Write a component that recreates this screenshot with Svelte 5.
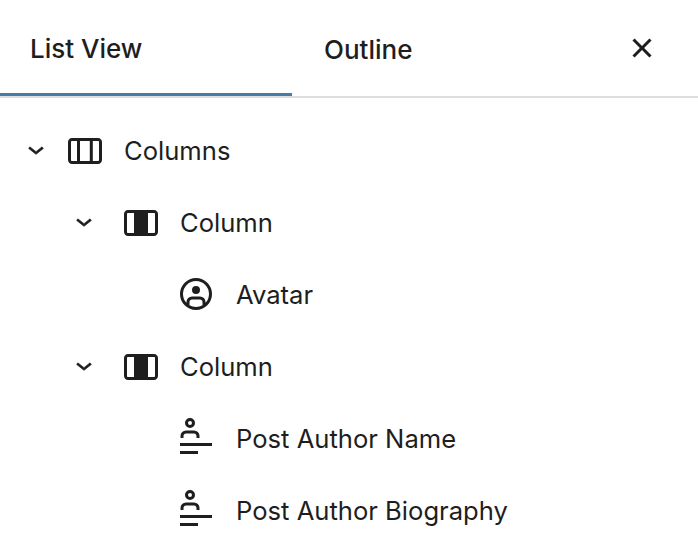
<script>
  const icons = {
    columns: "M19 6H6c-1.1 0-2 .9-2 2v9c0 1.1.9 2 2 2h13c1.1 0 2-.9 2-2V8c0-1.1-.9-2-2-2zm-4.1 1.5v10H10v-10h4.9zM5.5 17V8c0-.3.2-.5.5-.5h2.5v10H6c-.3 0-.5-.2-.5-.5zm14 0c0 .3-.2.5-.5.5h-2.6v-10H19c.3 0 .5.2.5.5v9z",
    column: "M19 6H6c-1.1 0-2 .9-2 2v9c0 1.1.9 2 2 2h13c1.1 0 2-.9 2-2V8c0-1.1-.9-2-2-2zM6 17.5c-.3 0-.5-.2-.5-.5V8c0-.3.2-.5.5-.5h3v10H6zm13.5-.5c0 .3-.2.5-.5.5h-3v-10h3c.3 0 .5.2.5.5v9z",
    avatar: "M7.25 16.437a6.5 6.5 0 1 1 9.5 0V16A2.75 2.75 0 0 0 14 13.25h-4A2.75 2.75 0 0 0 7.25 16v.437Zm1.5 1.193a6.47 6.47 0 0 0 3.25.87 6.47 6.47 0 0 0 3.25-.87V16c0-.69-.56-1.25-1.25-1.25h-4c-.69 0-1.25.56-1.25 1.25v1.63ZM4 12a8 8 0 1 1 16 0 8 8 0 0 1-16 0Zm10-2a2 2 0 1 1-4 0 2 2 0 0 1 4 0Z",
    author: "M10 4.5a1 1 0 11-2 0 1 1 0 012 0zm1.5 0a2.5 2.5 0 11-5 0 2.5 2.5 0 015 0zm2.25 7.5v-1A2.75 2.75 0 0011 8.25H7A2.75 2.75 0 004.25 11v1h1.5v-1c0-.69.56-1.25 1.25-1.25h4c.69 0 1.25.56 1.25 1.25v1h1.5zM4 20h9v-1.5H4V20zm16-4H4v-1.5h16V16z"
  };

  const rows = [
    { name: "Columns", icon: "columns", kind: "top" },
    { name: "Column", icon: "column", kind: "nested" },
    { name: "Avatar", icon: "avatar", kind: "leaf" },
    { name: "Column", icon: "column", kind: "nested" },
    { name: "Post Author Name", icon: "author", kind: "leaf" },
    { name: "Post Author Biography", icon: "author", kind: "leaf" }
  ];
</script>

<div class="panel">
  <div class="tabs">
    <button class="tab active">List View</button>
    <button class="tab">Outline</button>
    <button class="close" aria-label="Close">
      <svg viewBox="0 0 24 24" width="48" height="48"><path d="M12 13.06l3.712 3.713 1.061-1.06L13.061 12l3.712-3.712-1.06-1.06L12 10.938 8.288 7.227l-1.061 1.06L10.939 12l-3.712 3.712 1.06 1.061L12 13.061z"/></svg>
    </button>
  </div>

  <ul class="tree">
    {#each rows as row}
      <li class={"row " + row.kind}>
        {#if row.kind !== "leaf"}
          <svg class="chevron" viewBox="0 0 24 24" width="32" height="32"><path d="M17.5 11.6L12 16l-5.5-4.4.9-1.2L12 14l4.5-3.6 1 1.2z"/></svg>
        {/if}
        <svg viewBox="0 0 24 24" width="48" height="48"><path fill-rule="evenodd" clip-rule="evenodd" d={icons[row.icon]}/></svg>
        <span>{row.name}</span>
      </li>
    {/each}
  </ul>
</div>

<style>
  :global(body) {
    background: #fff;
  }
  .panel {
    width: 698px;
    height: 552px;
    overflow: hidden;
    font-family: Inter, "Liberation Sans", sans-serif;
    color: #1e1e1e;
  }
  svg {
    display: block;
    flex: none;
    fill: #1e1e1e;
  }
  button {
    font: inherit;
    color: inherit;
    background: none;
    border: 0;
    padding: 0;
  }

  .tabs {
    display: flex;
    height: 98px;
    box-sizing: border-box;
    border-bottom: 2px solid #ddd;
  }
  .tab {
    width: 292px;
    height: 96px;
    padding: 3px 0 0 30px;
    box-sizing: border-box;
    text-align: left;
    font-size: 26px;
    font-weight: 500;
  }
  .tab + .tab {
    margin-left: 2px;
  }
  .tab.active {
    border-bottom: 3px solid #4a7ba8;
  }
  .close {
    display: flex;
    margin-left: 32px;
    height: 96px;
    align-items: center;
  }

  .tree {
    list-style: none;
    margin: 0;
    padding: 16px 0 0;
  }
  .row {
    display: flex;
    align-items: center;
    height: 72px;
    font-size: 25.6px;
  }
  .row span {
    margin-left: 16px;
  }
  .chevron {
    margin-top: -2px;
  }
  .chevron path {
    stroke: #1e1e1e;
    stroke-width: 0.5;
  }
  .row.top {
    padding-left: 20px;
    gap: 8px;
  }
  .row.top span {
    margin-left: 8px;
  }
  .row.nested {
    padding-left: 68px;
    gap: 16px;
  }
  .row.nested span {
    margin-left: 0;
  }
  .row.leaf {
    padding-left: 172px;
  }
</style>
